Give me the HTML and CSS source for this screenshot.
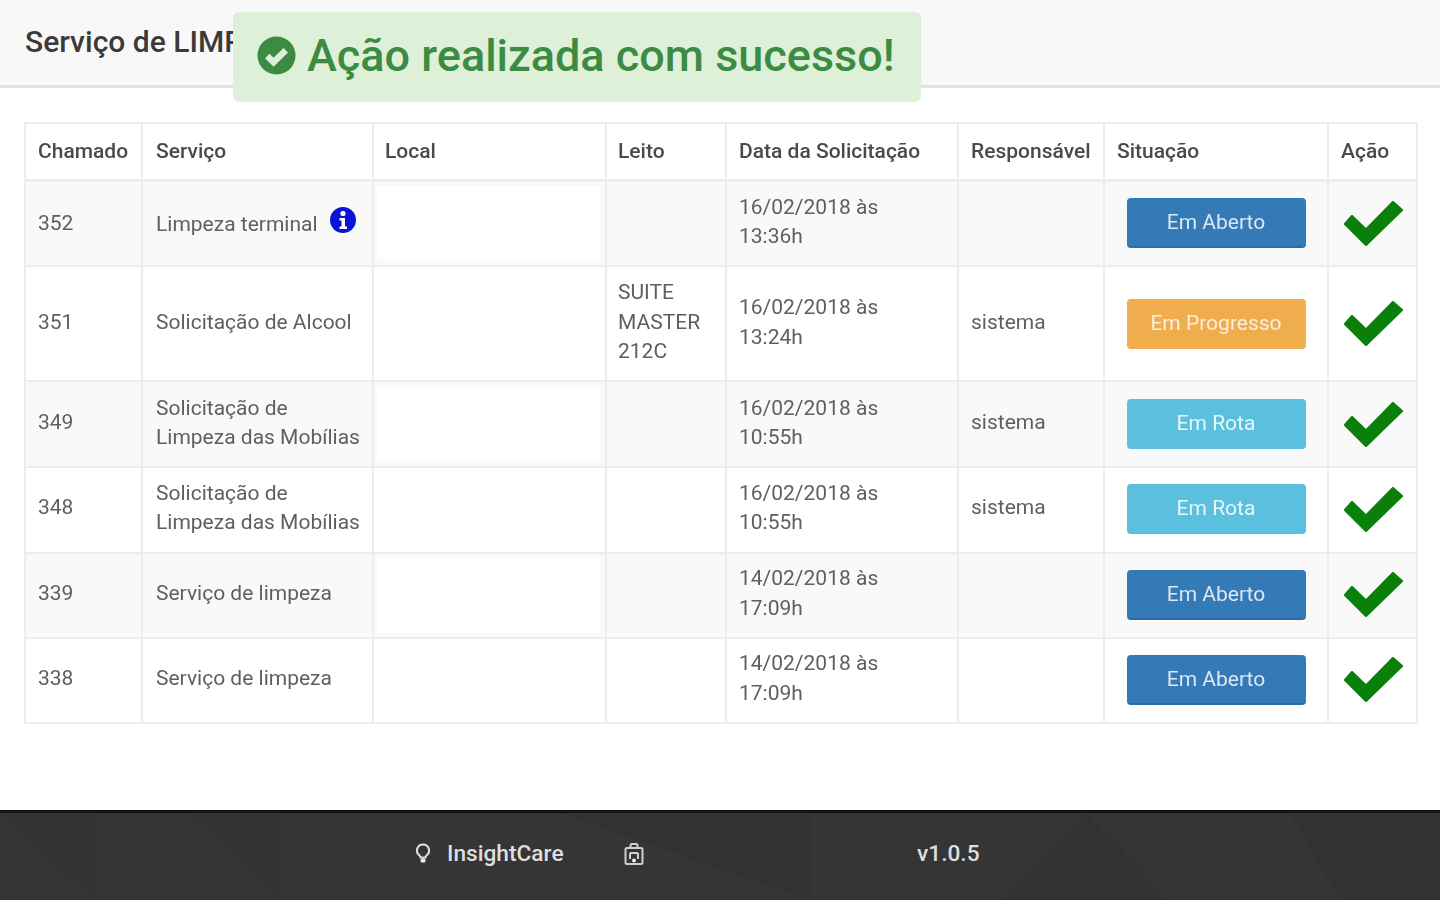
FILE: index.html
```html
<!DOCTYPE html>
<html lang="pt-BR">
<head>
<meta charset="utf-8">
<title>Serviço de Limpeza</title>
<link rel="stylesheet" href="styles.css">
</head>
<body>
<header class="topbar"><h1 class="title">Serviço de LIMPEZA</h1></header>
<div class="toast">
  <svg class="toast-icon" viewBox="0 0 40 40"><circle cx="20" cy="20" r="19.5" fill="#3c8b43"/><path d="M10.5 20.500 17 27 29.500 14.500" fill="none" stroke="#dff0d8" stroke-width="6.500"/></svg>
  <span>Ação realizada com sucesso!</span>
</div>
<main class="content">
<table class="grid">
<colgroup><col class="c1"><col class="c2"><col class="c3"><col class="c4"><col class="c5"><col class="c6"><col class="c7"><col class="c8"></colgroup>
<thead><tr class="r-head"><th>Chamado</th><th>Serviço</th><th>Local</th><th>Leito</th><th>Data da Solicitação</th><th>Responsável</th><th>Situação</th><th>Ação</th></tr></thead>
<tbody>
<tr class="r1"><td class="lower">352</td><td class="lower">Limpeza terminal <svg class="info" viewBox="0 0 26 26"><circle cx="13" cy="13" r="13" fill="#0a14d8"/><circle cx="13" cy="6.500" r="2.600" fill="#fff"/><path d="M9.500 11h5.500v8.500h2V22H9.500v-2.500h2V13.500h-2z" fill="#fff"/></svg></td><td class="blank"></td><td></td><td>16/02/2018 às<br>13:36h</td><td></td><td class="state"><span class="status open">Em Aberto</span></td><td class="state"><svg class="check" viewBox="0 0 59 45"><path d="M1.500 23 8 15.500 22 29 49 1.500 57.500 9 22 43.500z" fill="#0a800a" stroke="#0a800a" stroke-width="3" stroke-linejoin="round"/></svg></td></tr>
<tr class="r2"><td>351</td><td>Solicitação de Alcool</td><td></td><td>SUITE<br>MASTER<br>212C</td><td>16/02/2018 às<br>13:24h</td><td>sistema</td><td class="state"><span class="status progress">Em Progresso</span></td><td class="state"><svg class="check" viewBox="0 0 59 45"><path d="M1.500 23 8 15.500 22 29 49 1.500 57.500 9 22 43.500z" fill="#0a800a" stroke="#0a800a" stroke-width="3" stroke-linejoin="round"/></svg></td></tr>
<tr class="r3"><td>349</td><td>Solicitação de<br>Limpeza das Mobílias</td><td class="blank"></td><td></td><td>16/02/2018 às<br>10:55h</td><td>sistema</td><td class="state"><span class="status route">Em Rota</span></td><td class="state"><svg class="check" viewBox="0 0 59 45"><path d="M1.500 23 8 15.500 22 29 49 1.500 57.500 9 22 43.500z" fill="#0a800a" stroke="#0a800a" stroke-width="3" stroke-linejoin="round"/></svg></td></tr>
<tr class="r4"><td>348</td><td>Solicitação de<br>Limpeza das Mobílias</td><td></td><td></td><td>16/02/2018 às<br>10:55h</td><td>sistema</td><td class="state"><span class="status route">Em Rota</span></td><td class="state"><svg class="check" viewBox="0 0 59 45"><path d="M1.500 23 8 15.500 22 29 49 1.500 57.500 9 22 43.500z" fill="#0a800a" stroke="#0a800a" stroke-width="3" stroke-linejoin="round"/></svg></td></tr>
<tr class="r5"><td>339</td><td>Serviço de limpeza</td><td class="blank"></td><td></td><td>14/02/2018 às<br>17:09h</td><td></td><td class="state"><span class="status open">Em Aberto</span></td><td class="state"><svg class="check" viewBox="0 0 59 45"><path d="M1.500 23 8 15.500 22 29 49 1.500 57.500 9 22 43.500z" fill="#0a800a" stroke="#0a800a" stroke-width="3" stroke-linejoin="round"/></svg></td></tr>
<tr class="r6"><td>338</td><td>Serviço de limpeza</td><td></td><td></td><td>14/02/2018 às<br>17:09h</td><td></td><td class="state"><span class="status open">Em Aberto</span></td><td class="state"><svg class="check" viewBox="0 0 59 45"><path d="M1.500 23 8 15.500 22 29 49 1.500 57.500 9 22 43.500z" fill="#0a800a" stroke="#0a800a" stroke-width="3" stroke-linejoin="round"/></svg></td></tr>
</tbody>
</table>
</main>
<footer class="footer">
  <svg class="foot-art" viewBox="0 0 1440 87" preserveAspectRatio="none"><path d="M0 0 95 87V0zM190 0 280 87V0zM560 0 810 87V0zM1085 0 1000 87H1170zM1290 0 1340 87H1440V0z" fill="#323232"/></svg>
  <div class="foot-brand">
    <svg class="bulb" viewBox="0 0 16 22"><path d="M8 1.500a6 6 0 0 0-3.500 10.900c.7.600 1 1.300 1 2.100h5c0-.8.300-1.500 1-2.100A6 6 0 0 0 8 1.500z" fill="none" stroke="#e2e2e2" stroke-width="2"/><rect x="5.500" y="15.500" width="5" height="4" rx="1.500" fill="#f0f0f0"/></svg>
    <span>InsightCare</span>
    <svg class="bag" viewBox="0 0 20 24"><path d="M6.500 6V3.500a1.500 1.500 0 0 1 1.500-1.500h4a1.500 1.500 0 0 1 1.500 1.500V6" fill="none" stroke="#cfcfcf" stroke-width="2"/><rect x="1.500" y="6" width="17" height="16" rx="1.500" fill="none" stroke="#cfcfcf" stroke-width="2"/><path d="M6 11h8M6 11v6M14 11v6" stroke="#cfcfcf" stroke-width="2" fill="none"/><circle cx="10" cy="18.500" r="2" fill="#eee"/></svg>
  </div>
  <div class="foot-version">v1.0.5</div>
</footer>
</body>
</html>
```
FILE: styles.css
```css
* { box-sizing: border-box; }
html, body { margin: 0; height: 100%; }
body {
  width: 1440px;
  height: 900px;
  overflow: hidden;
  position: relative;
  display: flex;
  flex-direction: column;
  background: #fff;
  font-family: Roboto, "Liberation Sans", sans-serif;
  color: #5f5f5f;
  filter: blur(0.45px);
}
.topbar {
  height: 88px;
  flex: none;
  background: #f8f8f8;
  border-bottom: 3px solid #e3e3e3;
  padding: 24px 25px 0;
}
.title {
  margin: 0;
  white-space: nowrap;
  font-size: 30px;
  line-height: 36px;
  font-weight: 500;
  color: #3a3a3a;
}
.toast {
  position: absolute;
  left: 233px;
  top: 12px;
  width: 688px;
  height: 90px;
  background: #dff0d8;
  border-radius: 6px;
  display: flex;
  align-items: center;
  gap: 11px;
  padding: 0 0 3px 24px;
  color: #3c8b43;
  font-size: 45px;
  font-weight: 500;
  white-space: nowrap;
}
.toast-icon { width: 39px; height: 39px; flex: none; }
.content { flex: 1; padding: 34px 0 0 24px; }
.grid {
  table-layout: fixed;
  border-collapse: collapse;
  width: 1392px;
  font-size: 21px;
  line-height: 29.5px;
}
.c1 { width: 117px; } .c2 { width: 231px; } .c3 { width: 233px; } .c4 { width: 120px; }
.c5 { width: 232px; } .c6 { width: 146px; } .c7 { width: 224px; } .c8 { width: 89px; }
.grid th, .grid td {
  border: 2px solid #ededed;
  padding: 0 12px 2px;
  text-align: left;
  vertical-align: middle;
  font-weight: 400;
}
.grid th { font-weight: 500; color: #4a4a4a; border-bottom-width: 3px; padding-bottom: 0; }
.grid th:nth-child(2), .grid td:nth-child(2) { padding-left: 13px; }
.grid th:nth-child(3), .grid th:nth-child(4), .grid td:nth-child(3), .grid td:nth-child(4) { padding-left: 11px; }
.grid td.state { padding-bottom: 0; }
.grid td.lower { padding-bottom: 0; }
.r4 td, .r5 td, .r6 td { padding-bottom: 4px; }
.grid .r4 td.state, .grid .r5 td.state, .grid .r6 td.state { padding-bottom: 2px; }
.r-head { height: 57px; }
.r1 { height: 86px; } .r2 { height: 115px; } .r3 { height: 86px; }
.r4 { height: 86px; } .r5 { height: 85px; } .r6 { height: 85px; }
.r1 td, .r3 td, .r5 td { background: #f9f9f9; }
.grid td.blank { background: linear-gradient(#fff, #fff) 3px center / 223px 74px no-repeat #f9f9f9; }
.status {
  display: block;
  width: 179px;
  height: 50px;
  margin: 0 auto;
  border-radius: 4px;
  color: #fff;
  text-align: center;
  line-height: 49px;
}
.open { background: #337ab7; border-bottom: 2px solid #2a6ca6; color: #dbe7f2; }
.progress { background: #f0ad4e; color: #fbeedc; }
.route { background: #5bc0de; color: #e6f6fb; }
.check { display: block; width: 59px; height: 45px; margin-left: 3px; }
.info { width: 26px; height: 26px; margin-left: 7px; vertical-align: -2px; }
.footer {
  flex: none;
  position: relative;
  height: 90px;
  background: #353535;
  border-top: 3px solid #141414;
  display: flex;
  align-items: center;
  color: #dedede;
  font-size: 22.7px;
  font-weight: 500;
  padding: 0 0 6px 415px;
}
.foot-art { position: absolute; left: 0; top: 0; width: 1440px; height: 87px; }
.foot-brand, .foot-version { position: relative; }
.foot-brand { display: flex; align-items: center; width: 502px; }
.bulb { width: 16px; height: 22px; margin-right: 16px; }
.bag { width: 20px; height: 24px; margin-left: 60px; }
```
